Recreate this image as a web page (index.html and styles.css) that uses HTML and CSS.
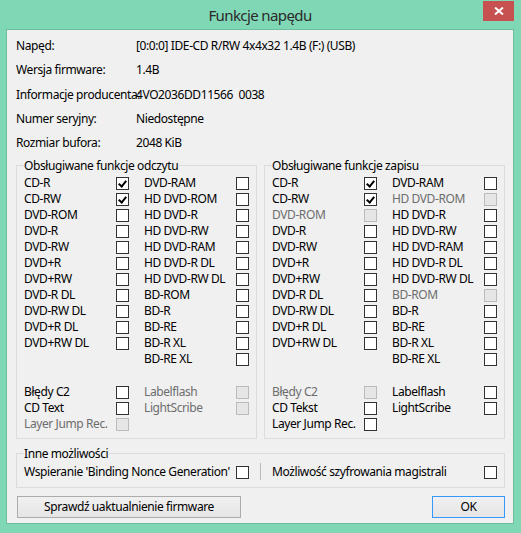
FILE: index.html
```html
<!DOCTYPE html>
<html lang="pl">
<head>
<meta charset="utf-8">
<title>Funkcje napędu</title>
<link rel="stylesheet" href="styles.css">
</head>
<body>
<div class="window">
  <div class="titlebar">
    <span></span>
    <span class="title">Funkcje napędu</span>
    <span class="close"><svg width="10" height="8" viewBox="0 0 10 8"><path d="M1 0.5 L9 7.5 M9 0.5 L1 7.5" stroke="#fff" stroke-width="2" fill="none"/></svg></span>
  </div>
  <div class="client">
    <div class="info">
      <span class="label">Napęd:</span><span>[0:0:0] IDE-CD R/RW 4x4x32 1.4B (F:) (USB)</span>
      <span class="label">Wersja firmware:</span><span>1.4B</span>
      <span class="label">Informacje producenta:</span><span>4VO2036DD11566&nbsp; 0038</span>
      <span class="label">Numer seryjny:</span><span>Niedostępne</span>
      <span class="label">Rozmiar bufora:</span><span>2048 KiB</span>
    </div>

    <div class="groups">
      <fieldset class="group">
        <legend>Obsługiwane funkcje odczytu</legend>
        <div class="grid">
          <span>CD-R</span><span class="cb on"></span><span>DVD-RAM</span><span class="cb"></span>
          <span>CD-RW</span><span class="cb on"></span><span>HD DVD-ROM</span><span class="cb"></span>
          <span>DVD-ROM</span><span class="cb"></span><span>HD DVD-R</span><span class="cb"></span>
          <span>DVD-R</span><span class="cb"></span><span>HD DVD-RW</span><span class="cb"></span>
          <span>DVD-RW</span><span class="cb"></span><span>HD DVD-RAM</span><span class="cb"></span>
          <span>DVD+R</span><span class="cb"></span><span>HD DVD-R DL</span><span class="cb"></span>
          <span>DVD+RW</span><span class="cb"></span><span>HD DVD-RW DL</span><span class="cb"></span>
          <span>DVD-R DL</span><span class="cb"></span><span>BD-ROM</span><span class="cb"></span>
          <span>DVD-RW DL</span><span class="cb"></span><span>BD-R</span><span class="cb"></span>
          <span>DVD+R DL</span><span class="cb"></span><span>BD-RE</span><span class="cb"></span>
          <span>DVD+RW DL</span><span class="cb"></span><span>BD-R XL</span><span class="cb"></span>
          <span></span><span></span><span>BD-RE XL</span><span class="cb"></span>
        </div>
        <div class="grid extra">
          <span>Błędy C2</span><span class="cb"></span><span class="dis">Labelflash</span><span class="cb dis"></span>
          <span>CD Text</span><span class="cb"></span><span class="dis">LightScribe</span><span class="cb dis"></span>
          <span class="dis">Layer Jump Rec.</span><span class="cb dis"></span><span></span><span></span>
        </div>
      </fieldset>

      <fieldset class="group">
        <legend>Obsługiwane funkcje zapisu</legend>
        <div class="grid">
          <span>CD-R</span><span class="cb on"></span><span>DVD-RAM</span><span class="cb"></span>
          <span>CD-RW</span><span class="cb on"></span><span class="dis">HD DVD-ROM</span><span class="cb dis"></span>
          <span class="dis">DVD-ROM</span><span class="cb dis"></span><span>HD DVD-R</span><span class="cb"></span>
          <span>DVD-R</span><span class="cb"></span><span>HD DVD-RW</span><span class="cb"></span>
          <span>DVD-RW</span><span class="cb"></span><span>HD DVD-RAM</span><span class="cb"></span>
          <span>DVD+R</span><span class="cb"></span><span>HD DVD-R DL</span><span class="cb"></span>
          <span>DVD+RW</span><span class="cb"></span><span>HD DVD-RW DL</span><span class="cb"></span>
          <span>DVD-R DL</span><span class="cb"></span><span class="dis">BD-ROM</span><span class="cb dis"></span>
          <span>DVD-RW DL</span><span class="cb"></span><span>BD-R</span><span class="cb"></span>
          <span>DVD+R DL</span><span class="cb"></span><span>BD-RE</span><span class="cb"></span>
          <span>DVD+RW DL</span><span class="cb"></span><span>BD-R XL</span><span class="cb"></span>
          <span></span><span></span><span>BD-RE XL</span><span class="cb"></span>
        </div>
        <div class="grid extra">
          <span class="dis">Błędy C2</span><span class="cb dis"></span><span>Labelflash</span><span class="cb"></span>
          <span>CD Tekst</span><span class="cb"></span><span>LightScribe</span><span class="cb"></span>
          <span>Layer Jump Rec.</span><span class="cb"></span><span></span><span></span>
        </div>
      </fieldset>
    </div>

    <fieldset class="other">
      <legend>Inne możliwości</legend>
      <div class="other-row">
        <span>Wspieranie 'Binding Nonce Generation'</span><span class="cb"></span>
        <span class="sep"></span>
        <span>Możliwość szyfrowania magistrali</span><span class="cb"></span>
      </div>
    </fieldset>

    <div class="buttons">
      <button class="btn wide">Sprawdź uaktualnienie firmware</button>
      <button class="btn ok">OK</button>
    </div>
  </div>
</div>
</body>
</html>
```

FILE: styles.css
```css
* { box-sizing: border-box; }
html, body { margin: 0; padding: 0; background: #80d7b5; }
body {
  font-family: "Noto Sans", "Open Sans", sans-serif;
  font-size: 12px;
  letter-spacing: -0.4px;
  color: #000;
}
.window {
  width: 521px;
  height: 533px;
  background: #80d7b5;
  padding: 0 7px 9px 6px;
  display: flex;
  flex-direction: column;
}
.titlebar {
  height: 29px;
  display: grid;
  grid-template-columns: 1fr auto 1fr;
  align-items: start;
}
.title {
  font-size: 15px;
  letter-spacing: -0.6px;
  line-height: 20px;
  margin-top: 5px;
  color: #2a2a2a;
}
.close {
  justify-self: end;
  width: 31px;
  height: 20px;
  margin-top: 1px;
  background: #c75050;
  display: flex;
  align-items: center;
  justify-content: center;
}
.close svg { display: block; }
.client {
  height: 495px;
  background: #f0f0f0;
  border: 1px solid #6cbf9e;
  padding: 4px 8px 0 9px;
  display: flex;
  flex-direction: column;
}
.info {
  display: grid;
  grid-template-columns: 120px auto;
  grid-auto-rows: 24.3px;
  align-items: center;
  line-height: 16px;
  white-space: nowrap;
}
.info span { display: block; }
.groups {
  margin-top: 2.5px;
  display: flex;
  gap: 7px;
}
fieldset {
  margin: 0;
  border: 1px solid #dcdcdc;
  min-inline-size: 0;
}
legend {
  padding: 0 1px 0 0;
  line-height: 16px;
  height: 16px;
}
.group {
  width: 241px;
  padding: 1px 7px 6px 7px;
}
.grid {
  display: grid;
  grid-template-columns: 92px 28px 92px 13px;
  grid-auto-rows: 16px;
  align-items: center;
  line-height: 16px;
  white-space: nowrap;
}
.grid.extra { margin-top: 17px; }
.dis { color: #6d6d6d; }
.cb {
  width: 13px;
  height: 13px;
  border: 1px solid #333;
  background: #fff;
  position: relative;
  top: 1px;
}
.cb.dis {
  border-color: #bcbcbc;
  background: #e6e6e6;
}
.cb.on::after {
  content: "";
  position: absolute;
  left: 3px;
  top: 1px;
  width: 3px;
  height: 6px;
  border: solid #000;
  border-width: 0 2px 2px 0;
  transform: rotate(40deg);
}
.other {
  margin-top: 7px;
  padding: 2px 7px 7px 7px;
  width: 489px;
}
.other-row {
  display: grid;
  grid-template-columns: 212px 13px 11px 1px 11px 212px 13px;
  grid-auto-rows: 16px;
  align-items: center;
  line-height: 16px;
  white-space: nowrap;
}
.other-row .sep {
  grid-column: 4;
  height: 17px;
  background: #b9b9b9;
}
.other-row span:nth-child(4) { grid-column: 6; }
.buttons {
  margin-top: 8px;
  display: flex;
  justify-content: space-between;
}
.btn {
  font-family: inherit;
  font-size: 12px;
  letter-spacing: -0.4px;
  color: #000;
  height: 22px;
  padding: 0;
  border: 1px solid #acacac;
  background: linear-gradient(#f0f0f0, #e5e5e5);
  border-radius: 0;
  line-height: 18px;
}
.btn.wide { width: 224px; margin-left: 1px; }
.btn.ok { width: 73px; border-color: #3399ff; }
```
